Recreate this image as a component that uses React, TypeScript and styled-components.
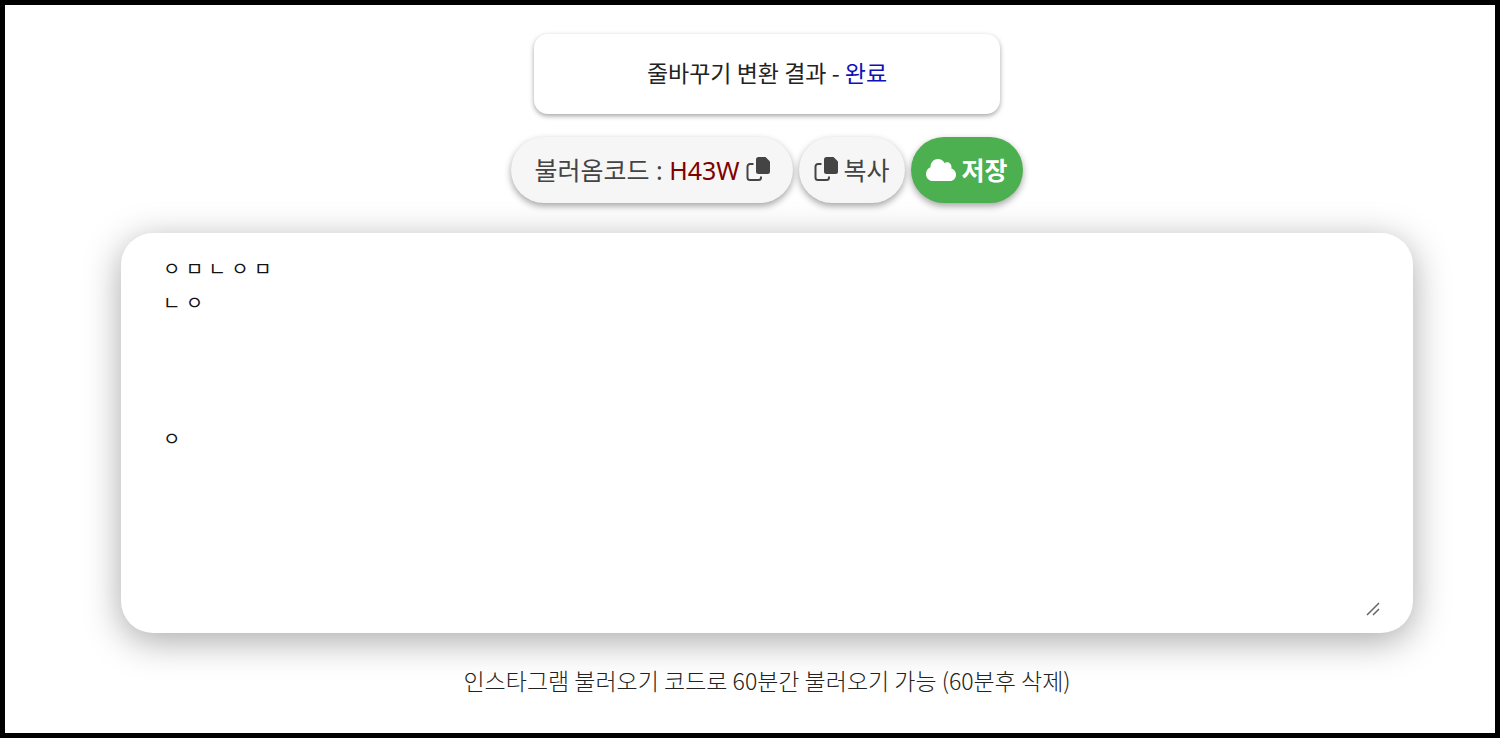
import React from "react";
import styled, { createGlobalStyle } from "styled-components";

const GlobalStyle = createGlobalStyle`
  *, *::before, *::after { box-sizing: border-box; }
  body {
    margin: 0;
    background: #fff;
    font-family: "Noto Sans", "Noto Sans CJK KR", sans-serif;
  }
`;

const Page = styled.main`
  display: flex;
  flex-direction: column;
  align-items: center;
  min-height: 100vh;
  padding: 29px 82px 32px 116px;
  border: 5px solid #000;
  background: #fff;
`;

const StatusCard = styled.section`
  width: 466px;
  max-width: 100%;
  padding: 22px 24px 26px;
  border-radius: 14px;
  background: #fff;
  box-shadow: 0 2px 5px rgba(0, 0, 0, 0.36);
  color: #222;
  font-family: "Noto Sans CJK KR", sans-serif;
  font-size: 23px;
  line-height: 32px;
  text-align: center;
`;

const Done = styled.span`
  color: #1010b8;
`;

const Actions = styled.div`
  display: flex;
  flex-wrap: wrap;
  justify-content: center;
  gap: 6px;
  margin-top: 23px;
`;

const PillButton = styled.button<{ $primary?: boolean; $wide?: boolean }>`
  display: flex;
  align-items: center;
  gap: 6px;
  height: 66px;
  padding: 0 ${(p) => (p.$wide ? 23 : 15)}px;
  border: 0;
  border-radius: 33px;
  background: ${(p) => (p.$primary ? "#4caf50" : "#f6f6f6")};
  color: ${(p) => (p.$primary ? "#fff" : "#444")};
  box-shadow: 0 3px 7px rgba(0, 0, 0, 0.36);
  font-family: inherit;
  font-size: 25px;
  font-weight: ${(p) => (p.$primary ? 700 : 400)};
  line-height: 32px;
  white-space: nowrap;
  cursor: pointer;
`;

const Code = styled.span`
  color: #800000;
`;

const Icon = styled.svg`
  display: block;
  flex: none;
`;

const Editor = styled.div`
  position: relative;
  width: 100%;
  margin-top: 30px;
  padding: 20px 32px 16px 42px;
  border-radius: 32px;
  background: #fff;
  box-shadow: 0 8px 36px rgba(0, 0, 0, 0.34);
`;

const ResultText = styled.textarea`
  display: block;
  width: 100%;
  height: 364px;
  padding: 0;
  border: 0;
  outline: 0;
  resize: none;
  background: transparent;
  color: #111;
  font-family: "Liberation Sans", "Noto Sans CJK KR", sans-serif;
  font-size: 19px;
  line-height: 34px;
`;

const Grip = styled.svg`
  position: absolute;
  right: 33px;
  bottom: 17px;
  pointer-events: none;
`;

const Note = styled.p`
  margin: 31px 0 0;
  color: #222;
  font-family: "Noto Sans CJK KR", sans-serif;
  font-size: 23px;
  font-weight: 300;
  line-height: 32px;
  text-align: center;
`;

const CopyIcon = () => (
  <Icon width="24" height="26" viewBox="0 0 24 26" aria-hidden="true">
    <path d="M12.500 0h7L24 4.500v10a2.500 2.500 0 0 1-2.500 2.500h-9a2.500 2.500 0 0 1-2.500-2.500v-12A2.500 2.500 0 0 1 12.500 0z" fill="currentColor" />
    <path d="M7.500 7H4a2.500 2.500 0 0 0-2.500 2.500v11A2.500 2.500 0 0 0 4 23h8.500a2.500 2.500 0 0 0 2.500-2.500V19.500" fill="none" stroke="currentColor" strokeWidth="2" />
  </Icon>
);

const CloudIcon = () => (
  <Icon width="30" height="22" viewBox="0 32 640 448" preserveAspectRatio="none" aria-hidden="true">
    <path
      fill="currentColor"
      d="M0 336c0 79.500 64.500 144 144 144h368c70.700 0 128-57.300 128-128 0-61.900-44-113.600-102.400-125.400 4.100-10.700 6.400-22.400 6.400-34.600 0-53-43-96-96-96-19.700 0-38.100 6-53.300 16.200C367 64.200 315.300 32 256 32c-88.400 0-160 71.600-160 160 0 2.700.1 5.400.2 8.100C40.200 219.800 0 273.200 0 336z"
    />
  </Icon>
);

const result = "ㅇ ㅁ ㄴ ㅇ ㅁ\nㄴ ㅇ\n\n\n\nㅇ";

export default function App() {
  return (
    <>
      <GlobalStyle />
      <Page>
        <StatusCard>
          줄바꾸기 변환 결과 - <Done>완료</Done>
        </StatusCard>
        <Actions>
          <PillButton type="button" $wide>
            <span>
              불러옴코드 : <Code>H43W</Code>
            </span>
            <CopyIcon />
          </PillButton>
          <PillButton type="button">
            <CopyIcon />
            <span>복사</span>
          </PillButton>
          <PillButton type="button" $primary>
            <CloudIcon />
            <span>저장</span>
          </PillButton>
        </Actions>
        <Editor>
          <ResultText aria-label="줄바꾸기 변환 결과" defaultValue={result} spellCheck={false} />
          <Grip width="14" height="14" viewBox="0 0 14 14" aria-hidden="true">
            <path d="M1 13 13 1M7 13l6-6" fill="none" stroke="#666" strokeWidth="1.500" />
          </Grip>
        </Editor>
        <Note>인스타그램 불러오기 코드로 60분간 불러오기 가능 (60분후 삭제)</Note>
      </Page>
    </>
  );
}
